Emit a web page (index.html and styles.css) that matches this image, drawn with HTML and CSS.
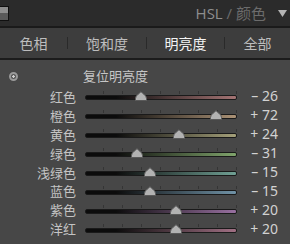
FILE: index.html
```html
<!DOCTYPE html>
<html lang="zh">
<head>
<meta charset="utf-8">
<title>HSL / 颜色</title>
<link rel="stylesheet" href="styles.css">
</head>
<body>
<div class="panel">
  <div class="header">
    <span class="toggle"></span>
    <span class="title"><b>HSL</b> / 颜色</span>
    <svg class="caret" width="9" height="7" viewBox="0 0 9 7"><path d="M0 0H9L4.5 7Z" fill="#b4b4b4"/></svg>
  </div>
  <div class="tabs">
    <span class="tab">色相</span>
    <span class="tab">饱和度</span>
    <span class="tab active">明亮度</span>
    <span class="tab">全部</span>
  </div>
  <div class="body">
    <div class="reset">
      <span class="target"></span>
      <span class="reset-label">复位明亮度</span>
    </div>
    <div class="sliders" id="sliders"></div>
  </div>
</div>
<script>
  // label, value, track end colour
  const rows = [
    ["红色", -26, "#a47474"],
    ["橙色", 72, "#ab9276"],
    ["黄色", 24, "#a4a07a"],
    ["绿色", -31, "#80a46c"],
    ["浅绿色", -15, "#70a094"],
    ["蓝色", -15, "#7092a6"],
    ["紫色", 20, "#9870a0"],
    ["洋红", 20, "#a07084"]
  ];
  const list = document.getElementById("sliders");
  for (const [name, val, col] of rows) {
    const row = document.createElement("div");
    row.className = "row";
    const pct = 50 + val / 2;
    const sign = val < 0 ? "\u2013 " : "+ ";
    row.innerHTML =
      '<span class="label">' + name + '</span>' +
      '<span class="slider"><span class="ticks"></span>' +
      '<span class="track" style="background: linear-gradient(to right, #0c0c0c 20%, ' + col + ')"></span>' +
      '<svg class="thumb" style="left: ' + pct + '%" width="12" height="10" viewBox="0 0 12 10"><path d="M6 0.5C7 2.5 11.5 4 11.5 7.5V9.5H0.5V7.5C0.5 4 5 2.5 6 0.5Z" fill="#b2b2b2" stroke="#5a5a5a" stroke-width="1"/></svg>' +
      '</span>' +
      '<span class="value">' + sign + Math.abs(val) + '</span>';
    list.appendChild(row);
  }
</script>
</body>
</html>
```

FILE: styles.css
```css
body {
  margin: 0;
  background: #474747;
  font-family: "Noto Sans", "Noto Sans CJK SC", sans-serif;
}
.panel {
  width: 290px;
  height: 244px;
  overflow: hidden;
}
.header {
  height: 28px;
  background: #2b2b2b;
  border-bottom: 2px solid #1a1a1a;
  display: flex;
  align-items: center;
  box-sizing: border-box;
}
.toggle {
  width: 9px;
  height: 15px;
  box-sizing: border-box;
  border: 1px solid #101010;
  border-left: 0;
  background: linear-gradient(#8e8e8e 50%, #5a5a5a 50%);
}
.title {
  margin-left: auto;
  color: #6c6c6c;
  font-size: 15px;
  font-family: "Open Sans", "Noto Sans CJK SC", sans-serif;
  line-height: 1;
}
.title b {
  font-weight: normal;
  color: #8e8e8e;
}
.caret {
  margin: 0 3px 0 12px;
}
.tabs {
  display: grid;
  grid-template-columns: 67px 79px 78px 1fr;
  height: 32px;
  background: #3d3d3d;
  border-bottom: 2px solid #1c1c1c;
  box-sizing: border-box;
  align-items: center;
}
.tab {
  text-align: center;
  color: #bdbdbd;
  font-size: 14px;
  font-family: "Noto Sans CJK SC", sans-serif;
  line-height: 12px;
  border-left: 1px solid #2a2a2a;
}
.tab:first-child {
  border-left: 0;
}
.tab.active {
  color: #f4f4f4;
}
.body {
  padding-top: 6px;
}
.reset {
  display: flex;
  align-items: center;
  height: 18px;
}
.target {
  width: 9px;
  height: 9px;
  box-sizing: border-box;
  border: 2px solid #9a9a9a;
  border-radius: 50%;
  margin: 3px 0 0 9px;
  background: radial-gradient(circle, #cfcfcf 1px, #555 1.5px);
}
.reset-label {
  margin-left: 65px;
  color: #c6c6c6;
  font-size: 13px;
  font-family: "Noto Sans CJK SC", sans-serif;
}
.sliders {
  padding-top: 3px;
}
.row {
  display: grid;
  grid-template-columns: 76px 152px 32px;
  column-gap: 9px;
  height: 18.9px;
  align-items: center;
}
.label {
  text-align: right;
  color: #c4c4c4;
  font-size: 13px;
  font-family: "Noto Sans CJK SC", sans-serif;
  line-height: 1;
}
.slider {
  position: relative;
  height: 12px;
}
.ticks {
  position: absolute;
  left: 0;
  right: 0;
  top: 1px;
  height: 3px;
  background: repeating-linear-gradient(to right, transparent 0 18px, #353535 18px 19px);
}
.track {
  position: absolute;
  left: 0;
  right: 0;
  top: 5px;
  height: 3px;
  border: 1px solid #1a1a1a;
  border-radius: 2px;
  box-sizing: content-box;
}
.thumb {
  position: absolute;
  top: 1px;
  margin-left: -6px;
}
.value {
  text-align: right;
  color: #d2d2d2;
  font-size: 14px;
  line-height: 1;
}
```
